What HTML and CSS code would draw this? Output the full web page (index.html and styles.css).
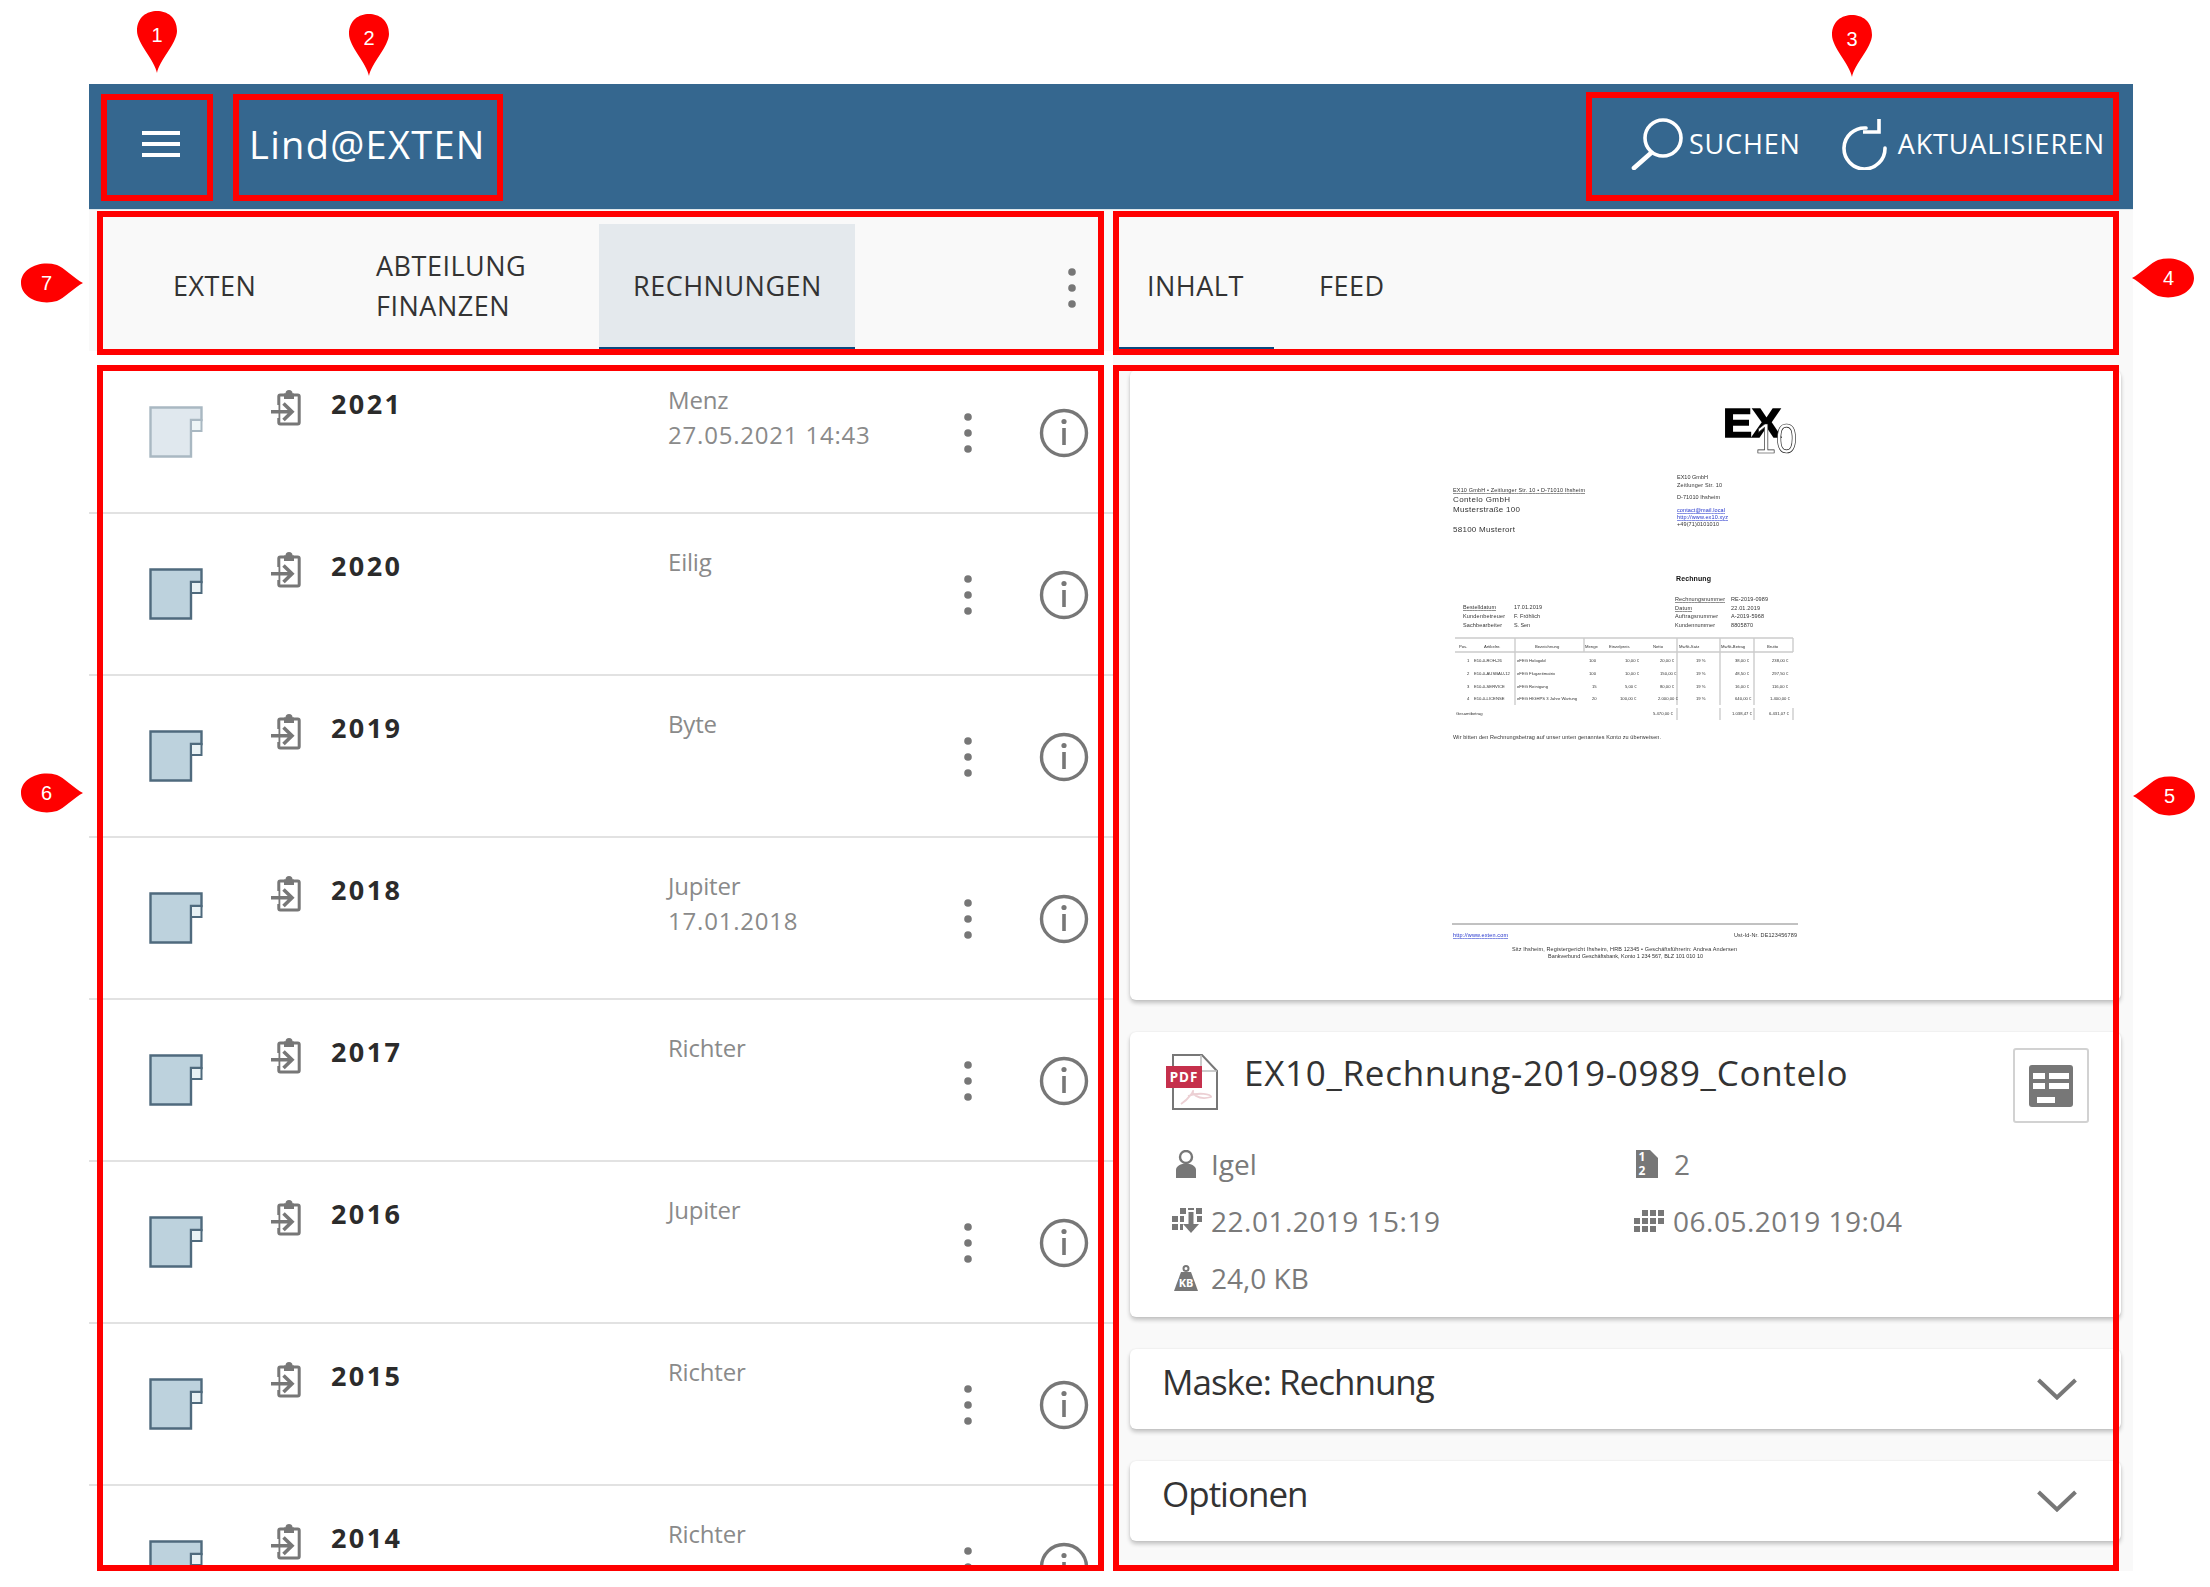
FILE: index.html
```html
<!DOCTYPE html>
<html lang="de">
<head>
  <meta charset="UTF-8" />
  <title>Lind@EXTEN</title>
  <link rel="stylesheet" href="styles.css">
</head>
<body>
  <!-- shared icons -->
  <svg class="defs" aria-hidden="true">
    <symbol id="i-folder" viewBox="0 0 54 52">
      <path class="folder-body" d="M1.5 1.5H52.5V14H42V50.5H1.5Z"/>
      <rect class="folder-tab" x="42" y="14" width="10.5" height="11"/>
    </symbol>
    <symbol id="i-clip" viewBox="0 0 30 36">
      <rect x="7.8" y="5" width="20.4" height="29" rx="1.5" fill="none" stroke="#777" stroke-width="3"/>
      <path d="M13 3.5H23V9H13Z" fill="#777"/>
      <circle cx="18" cy="3.5" r="3.5" fill="#777"/>
      <path d="M5 15V28" stroke="#fff" stroke-width="5"/>
      <path d="M0 21.7H20M12.5 13.5L21 21.7L12.5 30" fill="none" stroke="#777" stroke-width="3.6"/>
    </symbol>
    <symbol id="i-kebab" viewBox="0 0 10 44">
      <circle cx="5" cy="6" r="3.8"/><circle cx="5" cy="22" r="3.8"/><circle cx="5" cy="38" r="3.8"/>
    </symbol>
    <symbol id="i-info" viewBox="0 0 50 50">
      <circle cx="25" cy="25" r="22.5" fill="none" stroke="#777" stroke-width="3.4"/>
      <circle cx="25" cy="13.5" r="2.6" fill="#777"/>
      <path d="M25 20V37" stroke="#777" stroke-width="3.6"/>
    </symbol>
    <symbol id="i-chevron" viewBox="0 0 40 22">
      <path d="M1.5 2L20 19.5L38.5 2" fill="none" stroke="#777" stroke-width="4"/>
    </symbol>
  </svg>

  <div class="page">
    <div class="app">
      <header class="topbar">
        <button class="burger" aria-label="Menü"><span></span><span></span><span></span></button>
        <div class="brand">Lind@EXTEN</div>
        <div class="actions">
          <div class="action action-search">
            <svg width="52" height="52" viewBox="0 0 52 52"><circle cx="32" cy="20" r="18" fill="none" stroke="#fff" stroke-width="3.6"/><path d="M20 35L3 50" stroke="#fff" stroke-width="4.6" stroke-linecap="round"/></svg>
            <span>SUCHEN</span>
          </div>
          <div class="action action-refresh">
            <svg width="46" height="52" viewBox="0 0 46 52"><path d="M24 10A20.5 20.5 0 1 0 43 30" fill="none" stroke="#fff" stroke-width="3.6" stroke-linecap="round"/><path d="M37 1V14H21" fill="none" stroke="#fff" stroke-width="3.6"/></svg>
            <span>AKTUALISIEREN</span>
          </div>
        </div>
      </header>

      <div class="panes">
        <section class="pane-left">
          <nav class="tabs">
            <div class="tab tab-exten">EXTEN</div>
            <div class="tab tab-finance">ABTEILUNG<br>FINANZEN</div>
            <div class="tab tab-bills active">RECHNUNGEN</div>
            <svg class="tabs-more"><use href="#i-kebab"/></svg>
          </nav>
          <div class="list">
            <div class="row row-muted">
              <svg class="folder"><use href="#i-folder"/></svg>
              <svg class="clip"><use href="#i-clip"/></svg>
              <div class="year">2021</div>
              <div class="meta"><span class="who">Menz</span><br><span class="when">27.05.2021 14:43</span></div>
              <svg class="kebab"><use href="#i-kebab"/></svg>
              <svg class="info"><use href="#i-info"/></svg>
            </div>
            <div class="row">
              <svg class="folder"><use href="#i-folder"/></svg>
              <svg class="clip"><use href="#i-clip"/></svg>
              <div class="year">2020</div>
              <div class="meta"><span class="who">Eilig</span></div>
              <svg class="kebab"><use href="#i-kebab"/></svg>
              <svg class="info"><use href="#i-info"/></svg>
            </div>
            <div class="row">
              <svg class="folder"><use href="#i-folder"/></svg>
              <svg class="clip"><use href="#i-clip"/></svg>
              <div class="year">2019</div>
              <div class="meta"><span class="who">Byte</span></div>
              <svg class="kebab"><use href="#i-kebab"/></svg>
              <svg class="info"><use href="#i-info"/></svg>
            </div>
            <div class="row">
              <svg class="folder"><use href="#i-folder"/></svg>
              <svg class="clip"><use href="#i-clip"/></svg>
              <div class="year">2018</div>
              <div class="meta"><span class="who">Jupiter</span><br><span class="when">17.01.2018</span></div>
              <svg class="kebab"><use href="#i-kebab"/></svg>
              <svg class="info"><use href="#i-info"/></svg>
            </div>
            <div class="row">
              <svg class="folder"><use href="#i-folder"/></svg>
              <svg class="clip"><use href="#i-clip"/></svg>
              <div class="year">2017</div>
              <div class="meta"><span class="who">Richter</span></div>
              <svg class="kebab"><use href="#i-kebab"/></svg>
              <svg class="info"><use href="#i-info"/></svg>
            </div>
            <div class="row">
              <svg class="folder"><use href="#i-folder"/></svg>
              <svg class="clip"><use href="#i-clip"/></svg>
              <div class="year">2016</div>
              <div class="meta"><span class="who">Jupiter</span></div>
              <svg class="kebab"><use href="#i-kebab"/></svg>
              <svg class="info"><use href="#i-info"/></svg>
            </div>
            <div class="row">
              <svg class="folder"><use href="#i-folder"/></svg>
              <svg class="clip"><use href="#i-clip"/></svg>
              <div class="year">2015</div>
              <div class="meta"><span class="who">Richter</span></div>
              <svg class="kebab"><use href="#i-kebab"/></svg>
              <svg class="info"><use href="#i-info"/></svg>
            </div>
            <div class="row">
              <svg class="folder"><use href="#i-folder"/></svg>
              <svg class="clip"><use href="#i-clip"/></svg>
              <div class="year">2014</div>
              <div class="meta"><span class="who">Richter</span></div>
              <svg class="kebab"><use href="#i-kebab"/></svg>
              <svg class="info"><use href="#i-info"/></svg>
            </div>
          </div>
        </section>

        <section class="pane-right">
          <nav class="tabs">
            <div class="tab tab-content active">INHALT</div>
            <div class="tab tab-feed">FEED</div>
          </nav>
          <div class="cards">
            <div class="card card-preview">
              <!-- thumbnail of the invoice, the coordinates are the page's own -->
              <svg class="invoice" viewBox="1130 370 991 629">
                <g class="inv-logo">
                  <text x="1723" y="437" font-size="40" textLength="58" lengthAdjust="spacingAndGlyphs">EX</text>
                  <text class="inv-ten" x="1755" y="453" font-size="42" textLength="42" lengthAdjust="spacingAndGlyphs">10</text>
                </g>
                <g class="inv-small">
                  <text x="1453" y="492" textLength="132" text-decoration="underline">EX10 GmbH • Zeitlunger Str. 10 • D-71010 Ihsheim</text>
                  <text class="inv-big" x="1453" y="502" textLength="57">Contelo GmbH</text>
                  <text class="inv-big" x="1453" y="512" textLength="67">Musterstraße 100</text>
                  <text class="inv-big" x="1453" y="532" textLength="62">58100 Musterort</text>
                  <text x="1677" y="479" textLength="31">EX10 GmbH</text>
                  <text x="1677" y="487" textLength="45">Zeitlunger Str. 10</text>
                  <text x="1677" y="499" textLength="43">D-71010 Ihsheim</text>
                  <text class="inv-link" x="1677" y="512" textLength="48">contact@mail.local</text>
                  <text class="inv-link" x="1677" y="519" textLength="51">http://www.ex10.xyz</text>
                  <text x="1677" y="526" textLength="42">+49(71)0101010</text>
                  <text class="inv-head" x="1676" y="581" textLength="35">Rechnung</text>
                  <text x="1675" y="601" textLength="50" text-decoration="underline">Rechnungsnummer</text>
                  <text x="1731" y="601" textLength="37">RE-2019-0989</text>
                  <text x="1675" y="610" textLength="17" text-decoration="underline">Datum</text>
                  <text x="1731" y="610" textLength="29">22.01.2019</text>
                  <text x="1675" y="618" textLength="43">Auftragsnummer</text>
                  <text x="1731" y="618" textLength="33">A-2019-5968</text>
                  <text x="1675" y="627" textLength="40">Kundennummer</text>
                  <text x="1731" y="627" textLength="22">8805870</text>
                  <text x="1463" y="609" textLength="33" text-decoration="underline">Bestelldatum</text>
                  <text x="1514" y="609" textLength="28">17.01.2019</text>
                  <text x="1463" y="618" textLength="42">Kundenbetreuer</text>
                  <text x="1514" y="618" textLength="26">F. Fröhlich</text>
                  <text x="1463" y="627" textLength="39">Sachbearbeiter</text>
                  <text x="1514" y="627" textLength="16">S. Sen</text>
                </g>
                <g class="inv-lines">
                  <path d="M1455 638H1793M1455 652H1793"/>
                  <path d="M1515 638V705M1584 638V652M1677 638V705M1720 638V705M1754 638V705M1793 638V652M1677 708V720M1720 708V720M1754 708V720M1793 708V720"/>
                </g>
                <g class="inv-tiny">
                  <text x="1459" y="648">Pos.</text>
                  <text x="1484" y="648">Artikelnr.</text>
                  <text x="1535" y="648">Bezeichnung</text>
                  <text x="1585" y="648">Menge</text>
                  <text x="1609" y="648">Einzelpreis</text>
                  <text x="1653" y="648">Netto</text>
                  <text x="1679" y="648">MwSt-Satz</text>
                  <text x="1721" y="648">MwSt-Betrag</text>
                  <text x="1767" y="648">Brutto</text>
                  <text x="1467" y="662">1</text>
                  <text x="1474" y="662">E10-0-ROH-26</text>
                  <text x="1517" y="662">eFEG Hologold</text>
                  <text x="1589" y="662">100</text>
                  <text x="1625" y="662">10,00 €</text>
                  <text x="1660" y="662">20,00 €</text>
                  <text x="1696" y="662">19 %</text>
                  <text x="1735" y="662">38,00 €</text>
                  <text x="1772" y="662">238,00 €</text>
                  <text x="1467" y="675">2</text>
                  <text x="1474" y="675">E10-0-AUSBAU-12</text>
                  <text x="1517" y="675">eFEG Flugzeitmatrix</text>
                  <text x="1589" y="675">100</text>
                  <text x="1625" y="675">10,00 €</text>
                  <text x="1660" y="675">150,00 €</text>
                  <text x="1696" y="675">19 %</text>
                  <text x="1735" y="675">48,50 €</text>
                  <text x="1772" y="675">297,50 €</text>
                  <text x="1467" y="688">3</text>
                  <text x="1474" y="688">E10-0-SERVICE</text>
                  <text x="1517" y="688">eFEG Reinigung</text>
                  <text x="1592" y="688">15</text>
                  <text x="1625" y="688">5,00 €</text>
                  <text x="1660" y="688">80,00 €</text>
                  <text x="1696" y="688">19 %</text>
                  <text x="1735" y="688">16,00 €</text>
                  <text x="1772" y="688">116,00 €</text>
                  <text x="1467" y="700">4</text>
                  <text x="1474" y="700">E10-0-LICENSE</text>
                  <text x="1517" y="700">eFEG HIGHPS 3 Jahre Wartung</text>
                  <text x="1592" y="700">20</text>
                  <text x="1620" y="700">100,00 €</text>
                  <text x="1658" y="700">2.000,00 €</text>
                  <text x="1696" y="700">19 %</text>
                  <text x="1735" y="700">640,00 €</text>
                  <text x="1770" y="700">1.400,00 €</text>
                  <text x="1456" y="715">Gesamtbetrag</text>
                  <text x="1653" y="715">5.470,00 €</text>
                  <text x="1732" y="715">1.038,47 €</text>
                  <text x="1769" y="715">6.431,07 €</text>
                </g>
                <g class="inv-small">
                  <text x="1453" y="739" textLength="208">Wir bitten den Rechnungsbetrag auf unser unten genanntes Konto zu überweisen.</text>
                  <text class="inv-link" x="1453" y="937" textLength="55">http://www.exten.com</text>
                  <text x="1734" y="937" textLength="63">Ust-Id-Nr. DE123456789</text>
                  <text x="1512" y="951" textLength="225">Sitz Ihsheim, Registergericht Ihsheim, HRB 12345 • Geschäftsführerin: Andrea Andersen</text>
                  <text x="1548" y="958" textLength="155">Bankverbund Geschäftsbank, Konto 1 234 567, BLZ 101 010 10</text>
                </g>
                <path class="inv-rule" d="M1452 924H1798"/>
              </svg>
            </div>

            <div class="card card-file">
              <div class="file-head">
                <svg class="pdf" width="52" height="56" viewBox="0 0 52 56">
                  <path d="M7 1H36L51 17V55H7Z" fill="#fff" stroke="#777" stroke-width="2"/>
                  <path d="M35 1V17H51" fill="none" stroke="#bbb" stroke-width="1.5"/>
                  <rect y="12" width="36" height="22" fill="#c5304c"/>
                  <text class="pdf-label" x="18" y="28">PDF</text>
                  <path d="M15 50C24 44 28 36 27 37C25 38 31 47 45 43C46 40 32 38 22 42" fill="none" stroke="#ecd0d4" stroke-width="1.8"/>
                </svg>
                <div class="file-name">EX10_Rechnung-2019-0989_Contelo</div>
                <button class="form-btn" aria-label="Maske">
                  <svg width="44" height="42" viewBox="0 0 44 42">
                    <rect width="44" height="42" rx="3" fill="#777"/>
                    <path d="M4 8H16V14H4ZM20 8H40V14H20ZM4 18H16V24H4ZM20 18H40V24H20ZM8 32H26V38H8Z" fill="#fff"/>
                  </svg>
                </button>
              </div>
              <div class="file-meta">
                <div class="fact">
                  <svg class="fact-user" width="20" height="28" viewBox="0 0 20 28">
                    <circle cx="10" cy="7" r="6" fill="none" stroke="#777" stroke-width="2.4"/>
                    <path d="M0 28V20C0 16 5 13.500 10 13.500S20 16 20 20V28Z" fill="#777"/>
                  </svg>
                  <span>Igel</span>
                </div>
                <div class="fact">
                  <svg class="fact-pages" width="22" height="28" viewBox="0 0 22 28">
                    <path d="M0 0H14L22 8V28H0Z" fill="#777"/>
                    <text class="page-num" x="6" y="11">1</text>
                    <text class="page-num" x="6" y="25">2</text>
                  </svg>
                  <span>2</span>
                </div>
                <div class="fact">
                  <svg class="fact-upload" width="30" height="26" viewBox="0 0 30 26">
                    <path d="M8 0H14V6H8ZM24 0H30V6H24ZM0 8H6V14H0ZM8 8H12V14H8ZM25 8H30V14H25ZM0 16H6V22H0ZM8 16H11V22H8Z" fill="#777"/>
                    <path d="M16 0H22V2H16Z" fill="#777"/>
                    <path d="M19 4V22" stroke="#777" stroke-width="5"/>
                    <path d="M11 16H27L19 25Z" fill="#777"/>
                  </svg>
                  <span class="fact-date">22.01.2019 15:19</span>
                </div>
                <div class="fact">
                  <svg class="fact-grid" width="30" height="22" viewBox="0 0 30 22">
                    <path d="M8 0H14V6H8ZM16 0H22V6H16ZM24 0H30V6H24ZM0 8H6V14H0ZM8 8H14V14H8ZM16 8H22V14H16ZM24 8H30V14H24ZM0 16H6V22H0ZM8 16H14V22H8ZM16 16H22V22H16Z" fill="#777"/>
                  </svg>
                  <span class="fact-date">06.05.2019 19:04</span>
                </div>
                <div class="fact">
                  <svg class="fact-kb" width="24" height="26" viewBox="0 0 24 26">
                    <circle cx="12" cy="3.500" r="2.500" fill="none" stroke="#777" stroke-width="2"/>
                    <path d="M7 7H17L24 26H0Z" fill="#777"/>
                    <text class="kb-label" x="12" y="22">KB</text>
                  </svg>
                  <span>24,0 KB</span>
                </div>
              </div>
            </div>

            <div class="card card-fold">
              <span>Maske: Rechnung</span>
              <svg class="chevron"><use href="#i-chevron"/></svg>
            </div>
            <div class="card card-fold">
              <span>Optionen</span>
              <svg class="chevron"><use href="#i-chevron"/></svg>
            </div>
          </div>
        </section>
      </div>
    </div>

    <!-- annotation layer: red frames and numbered pins lie over the app -->
    <div class="frame frame-1"></div>
    <div class="frame frame-2"></div>
    <div class="frame frame-3"></div>
    <div class="frame frame-4"></div>
    <div class="frame frame-5"></div>
    <div class="frame frame-6"></div>
    <div class="frame frame-7"></div>

    <div class="pin pin-down pin-1"><svg width="40" height="62" viewBox="0 0 40 62"><path d="M20 62C18 50 0 32 0 20C0 6 10 0 20 0S40 6 40 20C40 32 22 50 20 62Z"/></svg><span>1</span></div>
    <div class="pin pin-down pin-2"><svg width="40" height="62" viewBox="0 0 40 62"><path d="M20 62C18 50 0 32 0 20C0 6 10 0 20 0S40 6 40 20C40 32 22 50 20 62Z"/></svg><span>2</span></div>
    <div class="pin pin-down pin-3"><svg width="40" height="62" viewBox="0 0 40 62"><path d="M20 62C18 50 0 32 0 20C0 6 10 0 20 0S40 6 40 20C40 32 22 50 20 62Z"/></svg><span>3</span></div>
    <div class="pin pin-left pin-4"><svg width="62" height="40" viewBox="0 0 62 40"><path d="M0 20C8 16 20 4 26 2C44 -3 62 6 62 20S44 43 26 38C20 36 8 24 0 20Z"/></svg><span>4</span></div>
    <div class="pin pin-left pin-5"><svg width="62" height="40" viewBox="0 0 62 40"><path d="M0 20C8 16 20 4 26 2C44 -3 62 6 62 20S44 43 26 38C20 36 8 24 0 20Z"/></svg><span>5</span></div>
    <div class="pin pin-right pin-6"><svg width="62" height="40" viewBox="0 0 62 40"><path d="M62 20C54 16 42 4 36 2C18 -3 0 6 0 20S18 43 36 38C42 36 54 24 62 20Z"/></svg><span>6</span></div>
    <div class="pin pin-right pin-7"><svg width="62" height="40" viewBox="0 0 62 40"><path d="M62 20C54 16 42 4 36 2C18 -3 0 6 0 20S18 43 36 38C42 36 54 24 62 20Z"/></svg><span>7</span></div>
  </div>
</body>
</html>
```

FILE: styles.css
```css
* { box-sizing: border-box; }
body { margin: 0; background: #fff; color: #333; font-family: "Open Sans", "Noto Sans", sans-serif; }
button { font: inherit; padding: 0; cursor: pointer; }
.defs { width: 0; height: 0; display: block; }

.page { position: relative; width: 2210px; height: 1587px; overflow: hidden; padding: 84px 77px 16px 89px; }
.app { height: 100%; display: flex; flex-direction: column; }

/* top bar */
.topbar { flex: none; height: 126px; display: flex; align-items: center; padding-bottom: 6px; background: #35678f; color: #fff; border-bottom: 1px solid #dfe6ea; }
.burger { width: 38px; height: 26px; margin-left: 53px; display: flex; flex-direction: column; justify-content: space-between; background: none; border: 0; }
.burger span { display: block; height: 4px; background: #fff; }
.brand { margin-left: 69px; font-size: 38px; letter-spacing: 1.3px; }
.actions { margin-left: auto; display: flex; align-items: center; }
.action { display: flex; align-items: center; font-size: 27px; letter-spacing: 0.85px; }
.action-search svg { margin-right: 6px; }
.action-refresh { margin-left: 41px; margin-right: 28px; }
.action-refresh svg { margin-right: 10px; }

.panes { flex: 1; min-height: 0; display: flex; }
.pane-left { width: 1024px; display: flex; flex-direction: column; }
.pane-right { flex: 1; min-width: 0; display: flex; flex-direction: column; background: #f9f9f9; }

/* tabs */
.tabs { flex: none; height: 141px; display: flex; padding-top: 14px; background: #f9f9f9; font-size: 27px; line-height: 40px; letter-spacing: 0.5px; color: #333; }
.tab { height: 126px; display: flex; align-items: center; padding-left: 34px; border-bottom: 3px solid transparent; }
.tab.active { border-bottom-color: #0d4a7f; }
.tab-exten { width: 203px; margin-left: 50px; }
.tab-finance { width: 257px; }
.tab-bills { width: 256px; background: #e4e9ed; }
.tabs-more { width: 10px; height: 44px; margin: 42px 0 0 212px; fill: #777; }
.tab-content { width: 161px; margin-left: 0; }
.tab-feed { padding-left: 45px; }

/* list on the left */
.list { flex: 1; min-height: 0; overflow: hidden; margin-bottom: 5px; padding-top: 1px; background: #fff; }
.row { height: 162px; display: flex; align-items: flex-start; border-bottom: 2px solid #e2e2e2; --folder-fill: #bdd2dd; --folder-line: #4f6a7d; --folder-tab: #e8f1f4; }
.row-muted { --folder-fill: #e0e8ee; --folder-line: #a9b8c2; --folder-tab: #eef5f6; }
.folder { width: 54px; height: 52px; margin: 54px 0 0 60px; flex: none; }
.folder-body { fill: var(--folder-fill); stroke: var(--folder-line); stroke-width: 2.4; }
.folder-tab { fill: var(--folder-tab); stroke: var(--folder-line); stroke-width: 2; }
.clip { width: 30px; height: 36px; margin: 38px 0 0 68px; flex: none; }
.year { width: 337px; margin: 34px 0 0 30px; flex: none; font-size: 27px; font-weight: 700; line-height: 36px; letter-spacing: 2.4px; color: #2b2b2b; }
.meta { width: 280px; margin-top: 30px; flex: none; font-size: 24px; line-height: 35px; color: #8a8a8a; }
.who { letter-spacing: -0.2px; }
.when { letter-spacing: 0.8px; }
.kebab { width: 10px; height: 44px; margin: 59px 0 0 15px; flex: none; fill: #777; }
.info { width: 50px; height: 50px; margin: 56px 0 0 66px; flex: none; }

/* cards on the right */
.cards { flex: 1; min-height: 0; display: flex; flex-direction: column; gap: 32px; padding: 19px 12px 0 17px; }
.card { background: #fff; border-radius: 6px; box-shadow: 0 0 2px rgba(0,0,0,0.08), 0 3px 4px rgba(0,0,0,0.22); }
.card-preview { height: 630px; }
.invoice { display: block; width: 991px; height: 629px; filter: blur(0.3px); }
.invoice text { font-family: "Liberation Sans", Arial, sans-serif; }
.inv-logo text { font-weight: 700; fill: #000; stroke: #000; stroke-width: 1.6; }
.inv-logo .inv-ten { font-weight: 400; fill: #fff; stroke: #222; stroke-width: 0.7; }
.inv-small { font-size: 5.5px; fill: #333; }
.inv-big { font-size: 8px; fill: #333; }
.inv-head { font-size: 7px; font-weight: 700; fill: #111; }
.inv-link { fill: #2233cc; text-decoration: underline; }
.inv-tiny { font-size: 4.2px; fill: #333; }
.inv-lines path { fill: none; stroke: #ccc; stroke-width: 1.4; }
.inv-rule { stroke: #666; stroke-width: 0.8; }

.card-file { height: 285px; padding: 16px 32px 0 36px; }
.file-head { height: 87px; display: flex; align-items: flex-start; }
.pdf { margin-top: 6px; flex: none; }
.pdf-label { font: 700 13.500px "Noto Sans", sans-serif; letter-spacing: 1px; fill: #fff; text-anchor: middle; }
.file-name { flex: 1; margin: 2px 0 0 26px; font-size: 35px; line-height: 46px; letter-spacing: 0.7px; color: #333; }
.form-btn { width: 76px; height: 75px; display: flex; align-items: center; justify-content: center; background: #fff; border: 2px solid #d2d2d2; border-radius: 3px; }
.file-meta { display: grid; grid-template-columns: 468px 1fr; grid-auto-rows: 57px; font-size: 28px; color: #7a7a7a; }
.fact { display: flex; align-items: center; }
.fact svg { flex: none; }
.fact-date { letter-spacing: 0.5px; }
.fact-user { margin: 0 15px 0 10px; }
.fact-pages { margin: 0 16px 0 2px; }
.fact-upload { margin: 0 9px 0 6px; }
.fact-grid { margin: 0 9px 0 0; }
.fact-kb { margin: 0 13px 0 8px; }
.page-num { font: 700 12px "Noto Sans", sans-serif; fill: #fff; text-anchor: middle; }
.kb-label { font: 700 11px "Noto Sans", sans-serif; fill: #fff; text-anchor: middle; }

.card-fold { height: 80px; display: flex; align-items: flex-start; justify-content: space-between; padding: 10px 44px 0 32px; font-size: 35px; line-height: 46px; letter-spacing: -1px; color: #333; }
.chevron { width: 40px; height: 22px; margin-top: 19px; flex: none; }

/* annotations */
.frame { position: absolute; border: 6px solid #f00; }
.frame-1 { left: 101px; top: 94px; width: 112px; height: 107px; }
.frame-2 { left: 233px; top: 94px; width: 270px; height: 107px; }
.frame-3 { left: 1586px; top: 92px; width: 533px; height: 109px; }
.frame-4 { left: 1113px; top: 211px; width: 1006px; height: 144px; }
.frame-5 { left: 1113px; top: 365px; width: 1006px; height: 1206px; }
.frame-6 { left: 97px; top: 365px; width: 1007px; height: 1206px; }
.frame-7 { left: 97px; top: 211px; width: 1007px; height: 144px; }

.pin { position: absolute; display: flex; align-items: center; justify-content: center; }
.pin svg { display: block; fill: #f00; }
.pin span { position: absolute; font: 20px "Liberation Sans", Arial, sans-serif; color: #fff; }
.pin-down { width: 40px; height: 62px; }
.pin-down span { top: 13px; }
.pin-left, .pin-right { width: 62px; height: 40px; }
.pin-left span { left: 31px; }
.pin-right span { left: 20px; }
.pin-1 { left: 137px; top: 11px; }
.pin-2 { left: 349px; top: 14px; }
.pin-3 { left: 1832px; top: 15px; }
.pin-4 { left: 2132px; top: 258px; }
.pin-5 { left: 2133px; top: 776px; }
.pin-6 { left: 21px; top: 773px; }
.pin-7 { left: 21px; top: 263px; }
```
